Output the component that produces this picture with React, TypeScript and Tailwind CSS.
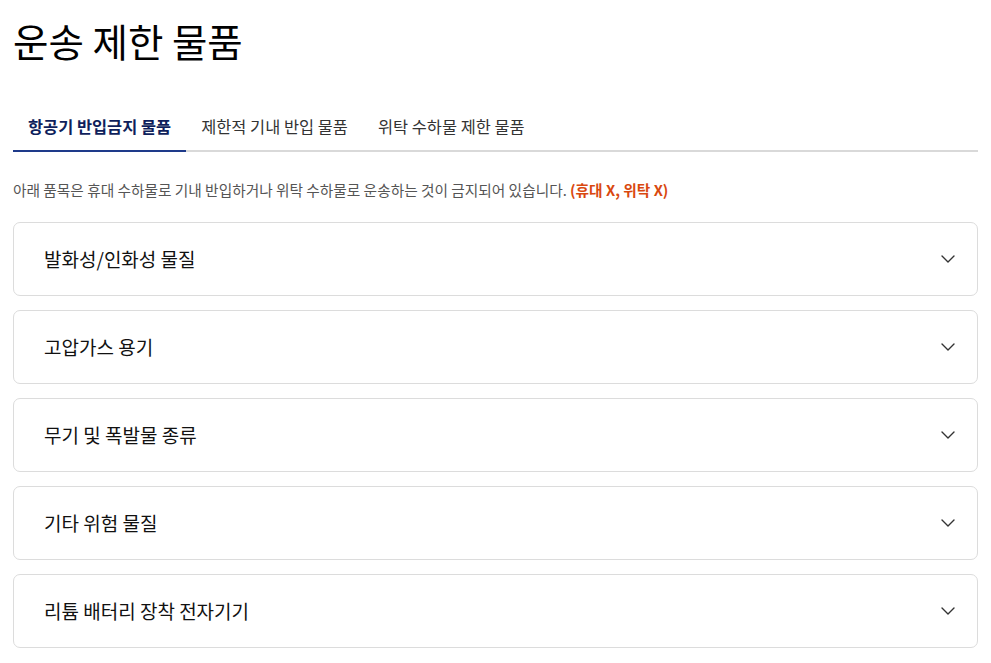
const tabs = ['항공기 반입금지 물품', '제한적 기내 반입 물품', '위탁 수하물 제한 물품'];

const items = [
  '발화성/인화성 물질',
  '고압가스 용기',
  '무기 및 폭발물 종류',
  '기타 위험 물질',
  '리튬 배터리 장착 전자기기',
];

function Chevron() {
  return (
    <svg width="14" height="8" viewBox="0 0 14 8" fill="none" className="text-[#333]">
      <path d="M1 1l6 6 6-6" stroke="currentColor" strokeWidth="1.4" strokeLinecap="round" strokeLinejoin="round" />
    </svg>
  );
}

export default function App() {
  return (
    <div
      className="min-h-screen bg-white px-[13px] pt-[15px] text-[#111]"
      style={{ fontFamily: '"Noto Sans CJK KR", "Noto Sans", sans-serif' }}
    >
      {/* Title */}
      <h1 className="text-[38.5px] font-normal leading-[50px] text-black">운송 제한 물품</h1>

      {/* Tabs */}
      <div className="mt-[43px] flex border-b-2 border-[#d9d9d9]">
        {tabs.map((tab, idx) => (
          <button
            key={tab}
            className={`-mb-[2px] px-[15px] pb-[12px] pt-[6px] text-[16.4px] leading-[24px] ${
              idx === 0
                ? 'border-b-2 border-[#1e3a8a] font-bold text-[#0f1f5c]'
                : 'border-b-2 border-transparent text-[#333]'
            }`}
          >
            {tab}
          </button>
        ))}
      </div>

      {/* Notice */}
      <p className="mt-[27px] text-[14.7px] leading-[22px] text-[#555]">
        아래 품목은 휴대 수하물로 기내 반입하거나 위탁 수하물로 운송하는 것이 금지되어 있습니다.{' '}
        <span className="font-bold text-[#d9480f]">(휴대 X, 위탁 X)</span>
      </p>

      {/* Accordion */}
      <div className="mt-[21px] flex flex-col gap-[14px]">
        {items.map((item) => (
          <div
            key={item}
            className="flex h-[74px] items-center justify-between rounded-[7px] border border-[#dcdcdc] pl-[30px] pr-[22px]"
          >
            <span className="text-[19px] leading-[26px] text-[#111]">{item}</span>
            <Chevron />
          </div>
        ))}
      </div>
    </div>
  );
}
